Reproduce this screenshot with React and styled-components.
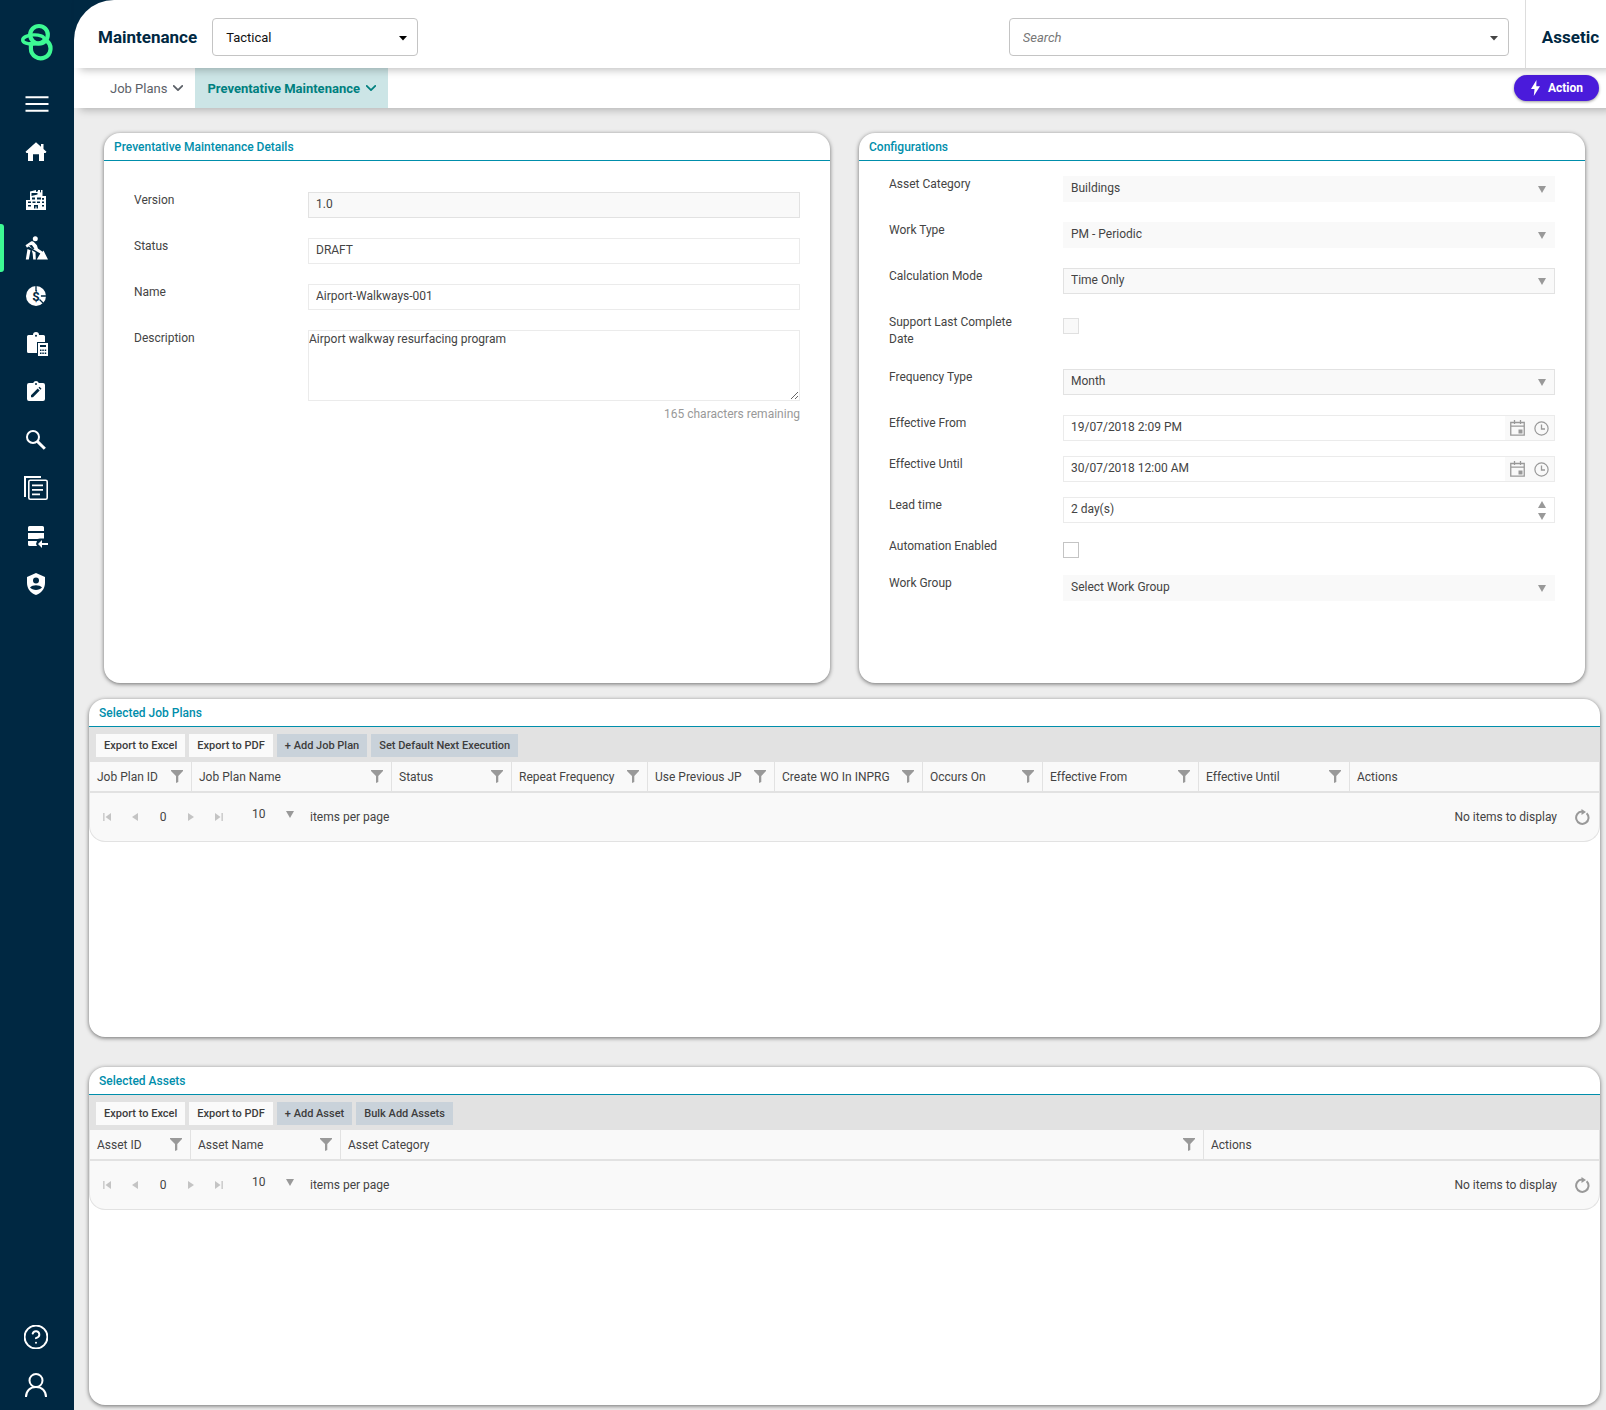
import React, { useState } from "react";
import styled, { createGlobalStyle } from "styled-components";
import { CircleHelp, ChevronDown } from "lucide-react";

const GlobalStyle = createGlobalStyle`
  *, *::before, *::after {
    box-sizing: border-box;
  }
  body {
    margin: 0;
    background: #ededed;
    color: #444;
    font-family: Roboto, "Liberation Sans", sans-serif;
    font-size: 12px;
  }
  button, input, select, textarea {
    font-family: inherit;
    font-size: inherit;
    color: inherit;
    margin: 0;
  }
  button {
    cursor: pointer;
  }
`;

const Page = styled.div`
  display: flex;
  min-height: 100vh;
`;

const Sidebar = styled.nav`
  display: flex;
  flex-direction: column;
  flex: none;
  width: 74px;
  padding-bottom: 1px;
  background: #002842;
  color: #fff;
`;

const LogoLink = styled.a`
  display: flex;
  align-items: center;
  justify-content: center;
  height: 80px;
  padding-top: 4px;
`;

const SideItem = styled.a`
  position: relative;
  display: flex;
  align-items: center;
  justify-content: center;
  height: 48px;
  padding-right: 2px;
  color: #fff;

  &::before {
    content: "";
    position: absolute;
    left: 0;
    top: 0;
    width: 4px;
    height: 100%;
    border-radius: 0 3px 3px 0;
    background: ${(props) => (props.$active ? "#3dfa94" : "transparent")};
  }

  svg {
    display: block;
    width: 24px;
    height: 24px;
  }
`;

const MenuButton = styled.button`
  display: flex;
  align-items: center;
  justify-content: center;
  height: 48px;
  padding: 0;
  border: 0;
  background: none;
  color: #fff;
`;

const SideSpacer = styled.div`
  flex: 1;
`;

const Main = styled.main`
  display: flex;
  flex-direction: column;
  flex: 1;
  min-width: 0;
`;

const HeaderWrap = styled.div`
  position: relative;
  z-index: 2;
  background: linear-gradient(to right, #002842 40px, #fff 40px);
  box-shadow: 6px 2px 8px rgba(0, 0, 0, 0.25);
`;

const Header = styled.header`
  display: flex;
  align-items: center;
  height: 68px;
  padding: 6px 0 0 24px;
  background: #fff;
  border-top-left-radius: 40px;
`;

const Title = styled.h1`
  margin: 0;
  color: #002842;
  font-size: 17px;
  font-weight: 700;
`;

const PickerWrap = styled.div`
  position: relative;
  width: ${(props) => props.$width};
  margin-left: ${(props) => (props.$push ? "auto" : "15px")};

  > svg {
    position: absolute;
    right: 11px;
    top: 18px;
    pointer-events: none;
  }
`;

const ModuleSelect = styled.select`
  appearance: none;
  display: block;
  width: 100%;
  height: 38px;
  padding: 0 13px;
  border: 1px solid #c4c4c4;
  border-radius: 4px;
  background: #fff;
  color: #111;
  font-size: 13px;
`;

const SearchInput = styled.input`
  display: block;
  width: 100%;
  height: 38px;
  padding: 0 13px;
  border: 1px solid #c4c4c4;
  border-radius: 4px;
  background: #fff;
  font-size: 13px;

  &::placeholder {
    color: #777;
    font-style: italic;
    opacity: 1;
  }
`;

const Tenant = styled.div`
  display: flex;
  align-items: center;
  height: 68px;
  margin: -6px 0 0 16px;
  padding: 6px 7px 0 16px;
  border-left: 1px solid #ddd;
  color: #002842;
  font-size: 17px;
  font-weight: 700;
`;

const SubNav = styled.div`
  position: relative;
  z-index: 1;
  display: flex;
  align-items: center;
  height: 40px;
  padding: 0 7px 0 24px;
  background: #fff;
  box-shadow: 6px 2px 8px rgba(0, 0, 0, 0.25);
`;

const Tab = styled.button`
  display: flex;
  align-items: center;
  gap: 6px;
  height: 40px;
  padding: 0 12px;
  border: 0;
  background: ${(props) => (props.$active ? "#cce5e6" : "transparent")};
  color: ${(props) => (props.$active ? "#00807f" : "#5c6168")};
  font-size: 13px;
  font-weight: ${(props) => (props.$active ? 700 : 400)};
`;

const ActionButton = styled.button`
  display: flex;
  align-items: center;
  gap: 8px;
  height: 26px;
  margin-left: auto;
  padding: 0 16px 0 17px;
  border: 0;
  border-radius: 13px;
  background: #4a1bdb;
  box-shadow: 0 1px 3px rgba(0, 0, 0, 0.4);
  color: #fff;
  font-weight: 700;
`;

const FormCards = styled.div`
  display: grid;
  grid-template-columns: 1fr 1fr;
  gap: 29px;
  margin: 25px 21px 0 30px;
`;

const Card = styled.section`
  background: #fff;
  border-radius: 16px;
  box-shadow: 0 1px 4px rgba(0, 0, 0, 0.55);
`;

const FormCard = styled(Card)`
  min-height: 550px;
`;

const GridCard = styled(Card)`
  min-height: 338px;
`;

const GridCards = styled.div`
  display: flex;
  flex-direction: column;
  gap: 30px;
  margin: 16px 6px 5px 15px;
`;

const CardTitle = styled.h2`
  height: 28px;
  margin: 0;
  padding: 0 10px;
  border-bottom: 1px solid #008eab;
  color: #008eab;
  font-size: 12px;
  font-weight: 500;
  line-height: 28px;
`;

const FieldList = styled.div`
  padding: ${(props) => (props.$roomy ? "31px" : "15px")} 30px 30px;
`;

const FieldRow = styled.div`
  display: grid;
  grid-template-columns: 174px 1fr;
  align-items: start;
  margin-bottom: ${(props) => (props.$tight ? "15px" : "20px")};
`;

const Label = styled.label`
  padding: 0 34px 1px 0;
  line-height: 17px;
`;

const Control = styled.div`
  position: relative;
  display: flex;
  height: 26px;
  border: 1px solid ${(props) => (props.$borderless ? "#f9f9f9" : props.$filled ? "#e2e2e2" : "#ebebeb")};
  background: ${(props) => (props.$filled ? "#f9f9f9" : "#fff")};
`;

const TextInput = styled.input`
  flex: 1;
  min-width: 0;
  height: 24px;
  padding: 0 7px 2px;
  border: 0;
  background: transparent;
`;

const Select = styled.select`
  appearance: none;
  flex: 1;
  min-width: 0;
  height: 24px;
  padding: 0 7px 2px;
  border: 0;
  background: transparent;
`;

const SelectArrow = styled.span`
  position: absolute;
  right: 8px;
  top: 9px;
  line-height: 0;
  pointer-events: none;
`;

const TextArea = styled.textarea`
  display: block;
  width: 100%;
  height: 71px;
  padding: 0;
  border: 1px solid #ebebeb;
  resize: both;
  line-height: 17px;
`;

const Remaining = styled.div`
  margin-top: 5px;
  color: #999;
  line-height: 17px;
  text-align: right;
`;

const CheckBox = styled.input`
  appearance: none;
  display: block;
  width: 16px;
  height: 16px;
  margin: 4px 0 2px;
  border: 1px solid ${(props) => (props.disabled ? "#e0e0e0" : "#c4c4c4")};
  background: ${(props) => (props.disabled ? "#f9f9f9" : "#fff")};

  &:checked {
    background: #008eab;
  }
`;

const PickerButtons = styled.div`
  display: flex;
  align-items: center;
  gap: 9px;
  padding: 0 5px;
  background: #f9f9f9;
`;

const IconButton = styled.button`
  display: flex;
  align-items: center;
  justify-content: center;
  padding: 0;
  border: 0;
  background: none;
  color: #999;
`;

const Spinner = styled.div`
  display: flex;
  flex-direction: column;
  justify-content: center;
  gap: 5px;
  padding: 0 8px;
`;

const Toolbar = styled.div`
  display: flex;
  gap: 4px;
  padding: 7px 7px 5px;
  background: #e2e2e2;
`;

const ToolButton = styled.button`
  height: 23px;
  padding: 0 8px;
  border: 0;
  background: ${(props) => (props.$accent ? "#c9d2da" : "#fafafa")};
  color: #3d3d3d;
  font-size: 11px;
  font-weight: 500;
`;

const GridFrame = styled.div`
  border: 1px solid #e2e2e2;
  border-top: 0;
  border-radius: 0 0 16px 16px;
  background: #f9f9f9;
`;

const Table = styled.table`
  width: 100%;
  table-layout: fixed;
  border-collapse: separate;
  border-spacing: 0;
  border-bottom: 2px solid #e2e2e2;
`;

const Th = styled.th`
  height: 29px;
  padding: 0 8px 0 7px;
  border-right: 1px solid #e2e2e2;
  font-weight: 400;
  text-align: left;
  white-space: nowrap;

  &:last-child {
    border-right: 0;
  }
`;

const ThInner = styled.div`
  display: flex;
  align-items: center;
  justify-content: space-between;
`;

const Pager = styled.div`
  display: flex;
  align-items: center;
  height: 48px;
  padding: 0 9px 0 13px;
`;

const PageButtons = styled.div`
  display: grid;
  grid-template-columns: repeat(5, 8px);
  gap: 20px;
  align-items: center;
  justify-items: center;

  button {
    color: #c4c4c4;
  }
`;

const PageSize = styled.div`
  position: relative;
  width: 58px;
  margin: 0 8px 6px 21px;
`;

const PageSizeSelect = styled.select`
  appearance: none;
  display: block;
  width: 100%;
  height: 24px;
  padding: 0 8px;
  border: 0;
  background: transparent;
`;

const PagerStatus = styled.span`
  margin: 0 17px 0 auto;
`;

const Triangle = ({ dir = "down", color = "#999" }) => {
  const points = {
    down: "0,0 8,0 4,7",
    up: "0,7 8,7 4,0",
    left: "7,0 7,8 1,4",
    right: "1,0 1,8 7,4",
  };
  const tall = dir === "left" || dir === "right";
  return (
    <svg width="8" height={tall ? 8 : 7} viewBox={tall ? "0 0 8 8" : "0 0 8 7"}>
      <polygon points={points[dir]} fill={color} />
    </svg>
  );
};

const Caret = ({ color }) => (
  <svg width="8" height="5" viewBox="0 0 8 5">
    <path d="M0 0h8L4 4.500z" fill={color} />
  </svg>
);

const PageEdge = ({ flip }) => (
  <svg width="8" height="8" viewBox="0 0 8 8" fill="currentColor">
    {flip ? <path d="M0 0v8l5.500-4zM6.500 0h1.300v8h-1.300z" /> : <path d="M8 0v8L2.500 4zM.2 0h1.300v8H.2z" />}
  </svg>
);

const FilterIcon = () => (
  <svg width="12" height="13" viewBox="0 0 12 13">
    <path d="M0 0h12v1L7.300 6v6L5 13V6L0 1z" fill="#999" />
  </svg>
);

const RefreshIcon = () => (
  <svg width="16" height="16" viewBox="0 0 16 16">
    <path d="M12.600 4.200A6.200 6.200 0 1 1 8 2.500" fill="none" stroke="#999" strokeWidth="2" />
    <path d="M7.500 0l4.500 3-4.500 3z" fill="#999" />
  </svg>
);

const CalendarIcon = () => (
  <svg width="15" height="16" viewBox="0 0 15 16">
    <path d="M.75 2.500h13.500v12.700H.75zM.75 6.200h13.500M4.500 0v4M10.500 0v4" fill="none" stroke="#999" strokeWidth="1.300" />
    <path d="M8.500 9.500h4v4h-4z" fill="#999" />
  </svg>
);

const ClockIcon = () => (
  <svg width="15" height="16" viewBox="0 0 15 16">
    <circle cx="7.500" cy="8.500" r="6.600" fill="none" stroke="#999" strokeWidth="1.200" />
    <path d="M7.500 4.500v4.500H11" fill="none" stroke="#999" strokeWidth="1.300" />
  </svg>
);

const BoltIcon = () => (
  <svg width="9" height="16" viewBox="0 0 9 16">
    <path d="M5.500 0L0 9h3.500L2.800 16 9 6.300H5.300z" fill="#fff" />
  </svg>
);

const Logo = () => (
  <svg width="34" height="38" viewBox="0 0 34 38" fill="none" stroke="#3dfa94">
    <circle cx="19" cy="11.800" r="8.800" strokeWidth="4.200" />
    <path d="M10.900 19v6.500a9.800 9.800 0 1 0 16-7.600" strokeWidth="4.200" />
    <ellipse cx="13.500" cy="16.500" rx="10.800" ry="4.600" strokeWidth="3.400" transform="rotate(-3 13.500 16.500)" />
  </svg>
);

const BurgerIcon = () => (
  <svg width="24" height="16" viewBox="0 0 24 16">
    <path d="M.5 1.200h23M.5 8h23M.5 14.800h23" stroke="currentColor" strokeWidth="2" />
  </svg>
);

const HomeIcon = () => (
  <svg viewBox="0 0 24 24" fill="currentColor">
    <path d="M12 2.300l5 4.500V4h2.500v5l3 2.800-1 1.200H20v8h-5v-6.700H9V21H4v-8H2.500l-1-1.200z" />
  </svg>
);

const BuildingsIcon = () => (
  <svg viewBox="0 0 24 24" fill="currentColor" fillRule="evenodd">
    <path d="M2 12h4V3.500L12 2v2l2-.8V2h2v2.500l1-.3V2h1.500v6H22v14H2zM7.500 5v3l6-1.500V5zM8 9.500v2h3v-2zM13 9.500v2h4v-2zM4 13.500V15h3v-1.500zM4 17v1.500h3V17zM8.500 13.500V15h3v-1.500zM13 13.500V15h3v-1.500zM18 10v1.800h2V10zM18 13.500V15h2v-1.500zM18 17v1.500h2V17zM10 17v3.500h1.500v-2h1v2H14V17z" />
  </svg>
);

const DiggerIcon = () => (
  <svg viewBox="0 0 24 24" fill="currentColor">
    <circle cx="11.300" cy="2.800" r="2.500" />
    <path d="M1.500 9.200L7 5.500c1-.6 2-.4 2.900.4l3 3.300 1 3.300 4.700 3.300.9-1.300L24 23.600H12.800l3.500-6.200L4.500 10.600l-1.500 1.200z" />
    <path d="M3.500 13l3 1.300-1.700 9.300H1.800zM7.800 14.200l3.700 2.100.3 7.300H9.200l-.5-5.800z" />
    <path d="M5 9.600l2.800-.6 2.600 3.500-1.500.7z" fill="#002842" />
  </svg>
);

const CostIcon = () => (
  <svg viewBox="0 0 24 24">
    <circle cx="12" cy="12" r="10" fill="currentColor" />
    <path d="M12 12V1M12 12h11M12 12l8 8" stroke="#002842" strokeWidth="1.300" />
    <circle cx="12" cy="12" r="5" fill="currentColor" />
    <text x="12" y="16.500" fontSize="13" fontWeight="700" textAnchor="middle" fill="#002842">
      $
    </text>
  </svg>
);

const ClipboardCalcIcon = () => (
  <svg viewBox="0 0 24 24">
    <path d="M4.500 3H9a3 3 0 0 1 6 0h4.500A1.500 1.500 0 0 1 21 4.500V10h-8v11H4.500A1.500 1.500 0 0 1 3 19.500v-15A1.500 1.500 0 0 1 4.500 3z" fill="currentColor" />
    <circle cx="12" cy="3.700" r="1" fill="#002842" />
    <path d="M14 11h10v13H14z" fill="currentColor" />
    <path d="M16 13h6v2h-6zM16 17.500h1.500V19H16zM18.300 17.500h1.500V19h-1.500zM20.700 17.500h1.500V19h-1.500zM16 20.500h1.500V22H16zM18.300 20.500h1.500V22h-1.500zM20.700 20.500h1.500V22h-1.500z" fill="#002842" />
  </svg>
);

const ClipboardEditIcon = () => (
  <svg viewBox="0 0 24 24">
    <path d="M5 3h4.200a3 3 0 0 1 5.600 0H19a2 2 0 0 1 2 2v14a2 2 0 0 1-2 2H5a2 2 0 0 1-2-2V5a2 2 0 0 1 2-2z" fill="currentColor" />
    <circle cx="12" cy="4" r="1" fill="#002842" />
    <path d="M7 15.300l6.700-6.700 2 2L9 17.300H7zM14.500 7.800l1-1 2 2-1 1z" fill="#002842" />
  </svg>
);

const SearchIcon = () => (
  <svg viewBox="0 0 24 24" fill="none" stroke="currentColor">
    <circle cx="9" cy="9" r="6" strokeWidth="2" />
    <path d="M13.500 13.500l7.300 7.300" strokeWidth="3" />
  </svg>
);

const DocumentsIcon = () => (
  <svg viewBox="0 0 24 24" fill="none" stroke="currentColor">
    <path d="M1 21V1h16" strokeWidth="2" />
    <rect x="4.800" y="4.300" width="18.400" height="18.900" rx="1.500" strokeWidth="1.600" />
    <path d="M8 9.300h11M8 13.800h11M8 18.300h8" strokeWidth="1.800" />
  </svg>
);

const StorageIcon = () => (
  <svg viewBox="0 0 24 24" fill="currentColor">
    <path d="M5.500 2h13A1.500 1.500 0 0 1 20 3.500V7H4V3.500A1.500 1.500 0 0 1 5.500 2zM4 9h16v5.500h-4L13.500 15H4zM4 17h9l-1 3 1 2H5.500A1.500 1.500 0 0 1 4 20.500zM14 20l4-4v3h6v2h-6v3z" />
  </svg>
);

const ShieldIcon = () => (
  <svg viewBox="0 0 24 24" fill="currentColor" fillRule="evenodd">
    <path d="M12 1L3 5v6c0 5.550 3.840 10.740 9 12 5.160-1.260 9-6.450 9-12V5zM12 5.500a3 3 0 1 1 0 6 3 3 0 0 1 0-6zM6 15.500c2.500-3 9.500-3 12 0-2.500 3.200-9.500 3.200-12 0z" />
  </svg>
);

const UserIcon = () => (
  <svg viewBox="0 0 24 24" fill="none" stroke="currentColor" strokeWidth="2">
    <circle cx="12" cy="7.500" r="6.500" />
    <path d="M2 24c0-6 4-10 10-10s10 4 10 10" />
  </svg>
);

const TabChevron = () => <ChevronDown size={10} viewBox="5 5 14 14" strokeWidth={2.5} />;

const sideItems = [
  { name: "Home", icon: <HomeIcon /> },
  { name: "Assets", icon: <BuildingsIcon /> },
  { name: "Maintenance", icon: <DiggerIcon />, active: true },
  { name: "Costs", icon: <CostIcon /> },
  { name: "Accounting", icon: <ClipboardCalcIcon /> },
  { name: "Assessments", icon: <ClipboardEditIcon /> },
  { name: "Search", icon: <SearchIcon /> },
  { name: "Documents", icon: <DocumentsIcon /> },
  { name: "Data exchange", icon: <StorageIcon /> },
  { name: "Administration", icon: <ShieldIcon /> },
];

const jobPlanColumns = [
  { title: "Job Plan ID", width: 102, filter: true },
  { title: "Job Plan Name", width: 200, filter: true },
  { title: "Status", width: 120, filter: true },
  { title: "Repeat Frequency", width: 136, filter: true },
  { title: "Use Previous JP", width: 127, filter: true },
  { title: "Create WO In INPRG", width: 148, filter: true },
  { title: "Occurs On", width: 120, filter: true },
  { title: "Effective From", width: 156, filter: true },
  { title: "Effective Until", width: 151, filter: true },
  { title: "Actions" },
];

const assetColumns = [
  { title: "Asset ID", width: 101, filter: true },
  { title: "Asset Name", width: 150, filter: true },
  { title: "Asset Category", filter: true },
  { title: "Actions", width: 395 },
];

const SelectField = ({ id, label, value, borderless }) => (
  <FieldRow>
    <Label htmlFor={id}>{label}</Label>
    <Control $filled $borderless={borderless}>
      <Select id={id} defaultValue={value}>
        <option>{value}</option>
      </Select>
      <SelectArrow>
        <Triangle />
      </SelectArrow>
    </Control>
  </FieldRow>
);

const InputField = ({ id, label, value, filled }) => (
  <FieldRow>
    <Label htmlFor={id}>{label}</Label>
    <Control $filled={filled}>
      <TextInput id={id} defaultValue={value} readOnly={filled} />
    </Control>
  </FieldRow>
);

const DateField = ({ id, label, value }) => (
  <FieldRow $tight>
    <Label htmlFor={id}>{label}</Label>
    <Control>
      <TextInput id={id} defaultValue={value} />
      <PickerButtons>
        <IconButton aria-label={`${label} date`}>
          <CalendarIcon />
        </IconButton>
        <IconButton aria-label={`${label} time`}>
          <ClockIcon />
        </IconButton>
      </PickerButtons>
    </Control>
  </FieldRow>
);

const DataGrid = ({ id, title, columns, actions }) => (
  <GridCard>
    <CardTitle>{title}</CardTitle>
    <Toolbar>
      <ToolButton>Export to Excel</ToolButton>
      <ToolButton>Export to PDF</ToolButton>
      {actions.map((action) => (
        <ToolButton key={action} $accent>
          {action}
        </ToolButton>
      ))}
    </Toolbar>
    <GridFrame>
      <Table>
        <colgroup>
          {columns.map((col) => (
            <col key={col.title} width={col.width} />
          ))}
        </colgroup>
        <thead>
          <tr>
            {columns.map((col) => (
              <Th key={col.title} scope="col">
                <ThInner>
                  {col.title}
                  {col.filter && (
                    <IconButton aria-label={`Filter ${col.title}`}>
                      <FilterIcon />
                    </IconButton>
                  )}
                </ThInner>
              </Th>
            ))}
          </tr>
        </thead>
      </Table>
      <Pager>
        <PageButtons>
          <IconButton aria-label="First page">
            <PageEdge />
          </IconButton>
          <IconButton aria-label="Previous page">
            <Triangle dir="left" color="#c4c4c4" />
          </IconButton>
          <span>0</span>
          <IconButton aria-label="Next page">
            <Triangle dir="right" color="#c4c4c4" />
          </IconButton>
          <IconButton aria-label="Last page">
            <PageEdge flip />
          </IconButton>
        </PageButtons>
        <PageSize>
          <PageSizeSelect id={`${id}-size`} defaultValue="10">
            <option>10</option>
            <option>20</option>
            <option>50</option>
          </PageSizeSelect>
          <SelectArrow>
            <Triangle />
          </SelectArrow>
        </PageSize>
        <label htmlFor={`${id}-size`}>items per page</label>
        <PagerStatus>No items to display</PagerStatus>
        <IconButton aria-label="Refresh">
          <RefreshIcon />
        </IconButton>
      </Pager>
    </GridFrame>
  </GridCard>
);

const App = () => {
  const [leadTime, setLeadTime] = useState(2);

  return (
    <Page>
      <GlobalStyle />
      <Sidebar>
        <LogoLink href="#" aria-label="Start">
          <Logo />
        </LogoLink>
        <MenuButton aria-label="Menu">
          <BurgerIcon />
        </MenuButton>
        {sideItems.map((item) => (
          <SideItem key={item.name} href="#" aria-label={item.name} $active={item.active}>
            {item.icon}
          </SideItem>
        ))}
        <SideSpacer />
        <SideItem href="#" aria-label="Help">
          <CircleHelp strokeWidth={1.7} viewBox="1.500 1.500 21 21" />
        </SideItem>
        <SideItem href="#" aria-label="Profile">
          <UserIcon />
        </SideItem>
      </Sidebar>
      <Main>
        <HeaderWrap>
          <Header>
            <Title>Maintenance</Title>
            <PickerWrap $width="206px">
              <ModuleSelect aria-label="Module" defaultValue="Tactical">
                <option>Tactical</option>
              </ModuleSelect>
              <Caret color="#000" />
            </PickerWrap>
            <PickerWrap $width="500px" $push>
              <SearchInput type="search" aria-label="Search" placeholder="Search" />
              <Caret color="#444" />
            </PickerWrap>
            <Tenant>Assetic</Tenant>
          </Header>
        </HeaderWrap>
        <SubNav>
          <Tab>
            Job Plans
            <TabChevron />
          </Tab>
          <Tab $active>
            Preventative Maintenance
            <TabChevron />
          </Tab>
          <ActionButton>
            <BoltIcon />
            Action
          </ActionButton>
        </SubNav>
        <FormCards>
          <FormCard>
            <CardTitle>Preventative Maintenance Details</CardTitle>
            <FieldList $roomy>
              <InputField id="version" label="Version" value="1.0" filled />
              <InputField id="status" label="Status" value="DRAFT" />
              <InputField id="name" label="Name" value="Airport-Walkways-001" />
              <FieldRow>
                <Label htmlFor="description">Description</Label>
                <div>
                  <TextArea id="description" defaultValue="Airport walkway resurfacing program" />
                  <Remaining>165 characters remaining</Remaining>
                </div>
              </FieldRow>
            </FieldList>
          </FormCard>
          <FormCard>
            <CardTitle>Configurations</CardTitle>
            <FieldList>
              <SelectField id="category" label="Asset Category" value="Buildings" borderless />
              <SelectField id="workType" label="Work Type" value="PM - Periodic" borderless />
              <SelectField id="mode" label="Calculation Mode" value="Time Only" />
              <FieldRow>
                <Label htmlFor="lastComplete">Support Last Complete Date</Label>
                <CheckBox id="lastComplete" type="checkbox" disabled />
              </FieldRow>
              <SelectField id="frequency" label="Frequency Type" value="Month" />
              <DateField id="from" label="Effective From" value="19/07/2018 2:09 PM" />
              <DateField id="until" label="Effective Until" value="30/07/2018 12:00 AM" />
              <FieldRow $tight>
                <Label htmlFor="lead">Lead time</Label>
                <Control>
                  <TextInput id="lead" value={`${leadTime} day(s)`} readOnly />
                  <Spinner>
                    <IconButton aria-label="Increase" onClick={() => setLeadTime(leadTime + 1)}>
                      <Triangle dir="up" />
                    </IconButton>
                    <IconButton aria-label="Decrease" onClick={() => setLeadTime(Math.max(0, leadTime - 1))}>
                      <Triangle />
                    </IconButton>
                  </Spinner>
                </Control>
              </FieldRow>
              <FieldRow $tight>
                <Label htmlFor="automation">Automation Enabled</Label>
                <CheckBox id="automation" type="checkbox" />
              </FieldRow>
              <SelectField id="group" label="Work Group" value="Select Work Group" borderless />
            </FieldList>
          </FormCard>
        </FormCards>
        <GridCards>
          <DataGrid
            id="jobPlans"
            title="Selected Job Plans"
            columns={jobPlanColumns}
            actions={["+ Add Job Plan", "Set Default Next Execution"]}
          />
          <DataGrid
            id="assets"
            title="Selected Assets"
            columns={assetColumns}
            actions={["+ Add Asset", "Bulk Add Assets"]}
          />
        </GridCards>
      </Main>
    </Page>
  );
};

export default App;
